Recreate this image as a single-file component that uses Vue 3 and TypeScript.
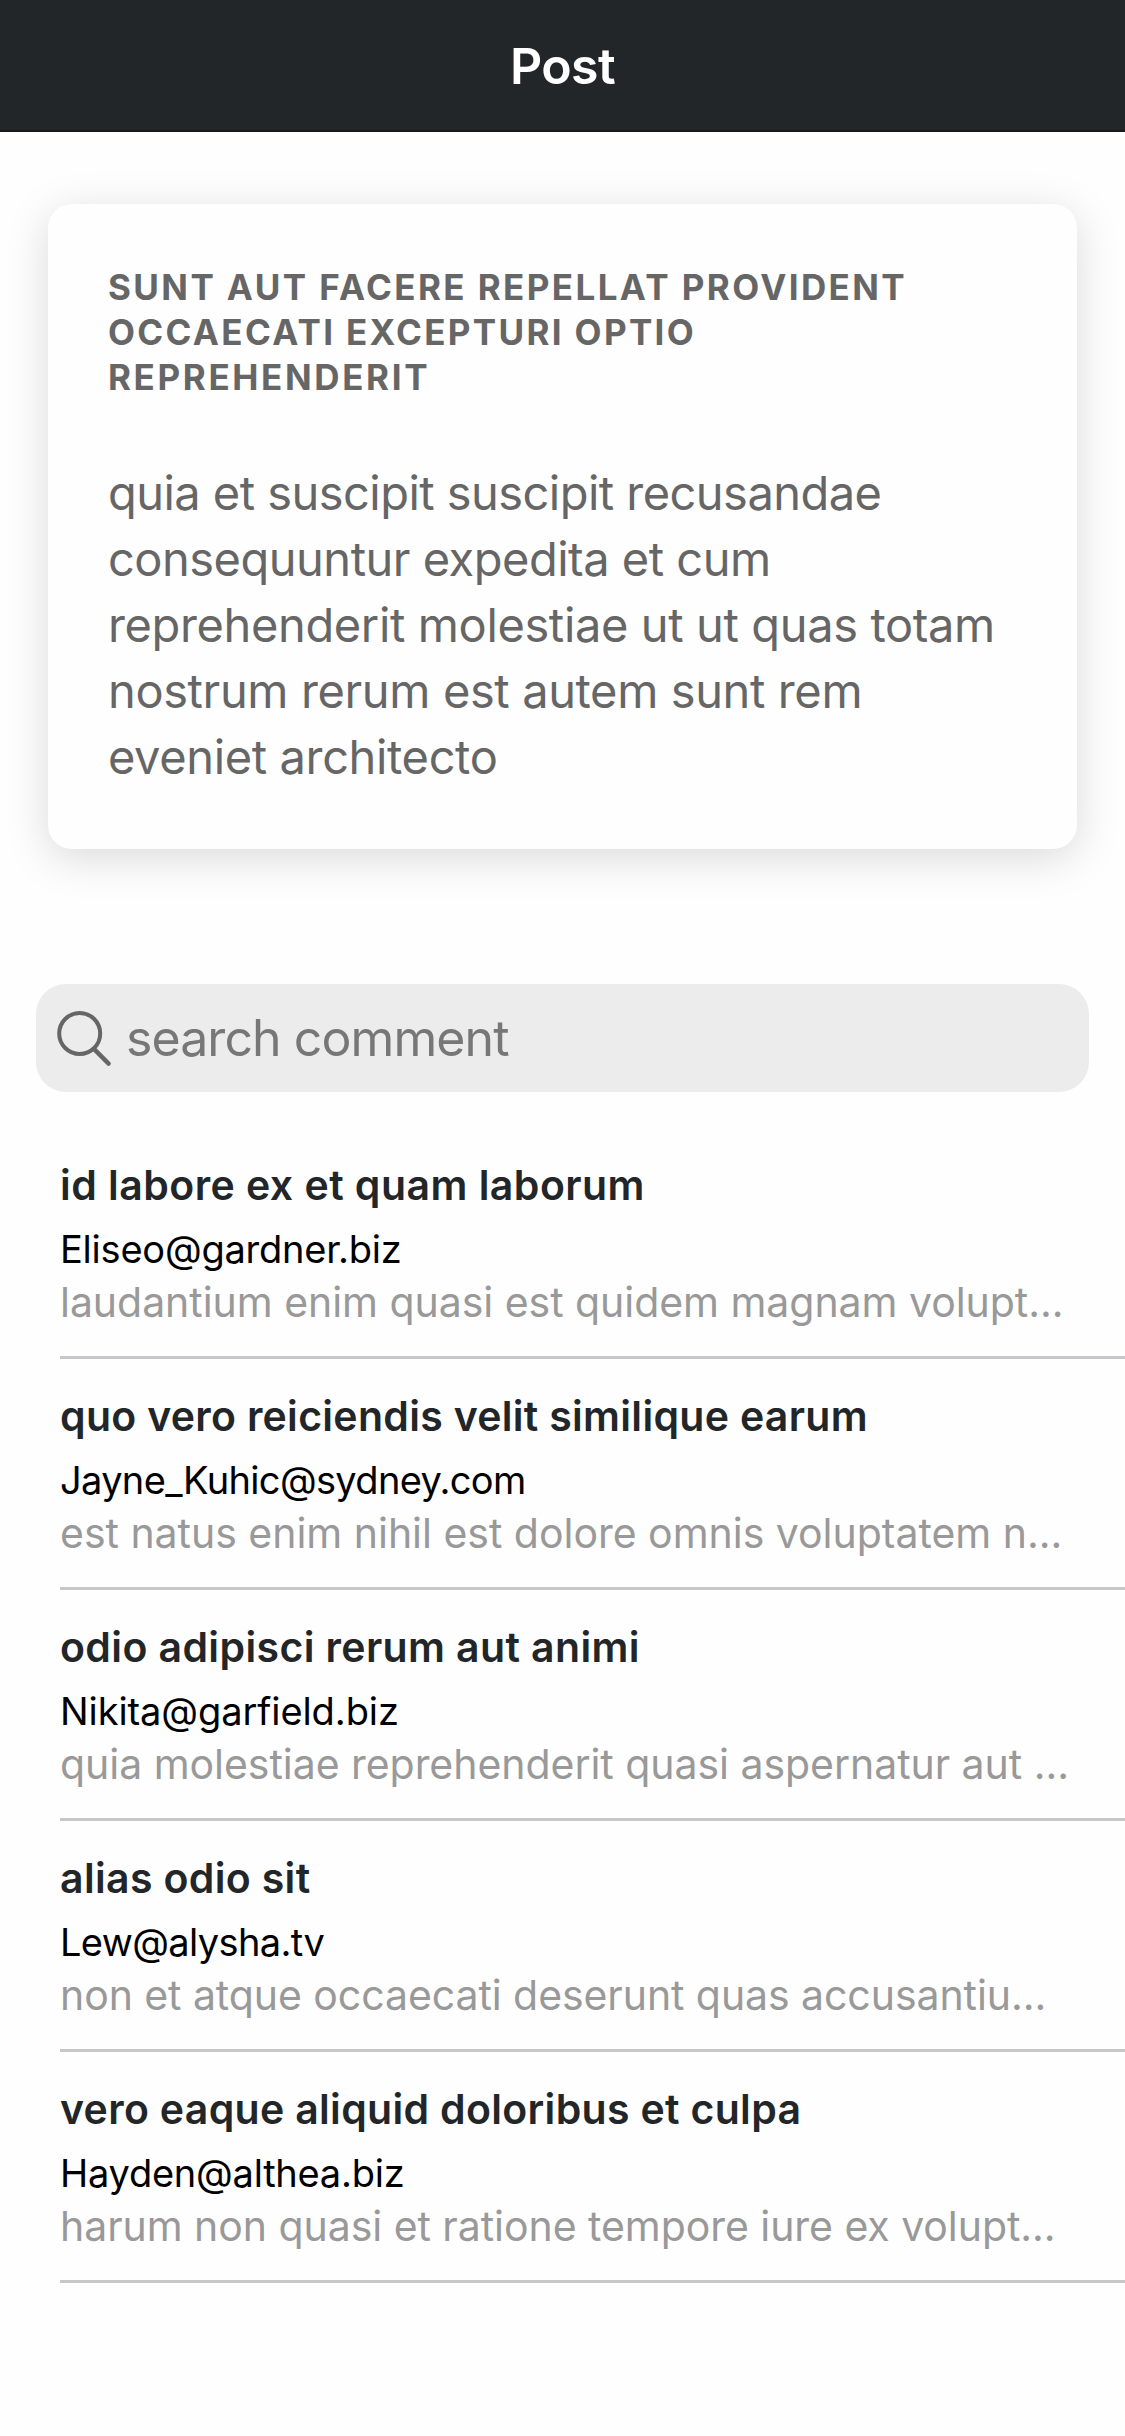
<script setup lang="ts">
interface Line {
  text: string
  /** letter spacing in pixels */
  tracking: number
}
interface Comment {
  id: number
  name: Line
  email: Line
  body: Line
}

const line = (text: string, tracking: number): Line => ({ text, tracking })

const postTitle: Line[] = [
  line('sunt aut facere repellat provident', 2.4),
  line('occaecati excepturi optio', 2.34),
  line('reprehenderit', 2.63),
]

const postBody: Line[] = [
  line('quia et suscipit suscipit recusandae', -0.54),
  line('consequuntur expedita et cum', -0.5),
  line('reprehenderit molestiae ut ut quas totam', -0.37),
  line('nostrum rerum est autem sunt rem', -0.38),
  line('eveniet architecto', -0.37),
]

const comments: Comment[] = [
  {
    id: 1,
    name: line('id labore ex et quam laborum', 0.46),
    email: line('Eliseo@gardner.biz', -0.22),
    body: line('laudantium enim quasi est quidem magnam volupt...', -0.04),
  },
  {
    id: 2,
    name: line('quo vero reiciendis velit similique earum', 0.3),
    email: line('Jayne_Kuhic@sydney.com', -0.66),
    body: line('est natus enim nihil est dolore omnis voluptatem n...', -0.02),
  },
  {
    id: 3,
    name: line('odio adipisci rerum aut animi', 0.38),
    email: line('Nikita@garfield.biz', -0.08),
    body: line('quia molestiae reprehenderit quasi aspernatur aut ...', -0.04),
  },
  {
    id: 4,
    name: line('alias odio sit', 0.34),
    email: line('Lew@alysha.tv', -0.62),
    body: line('non et atque occaecati deserunt quas accusantiu...', -0.07),
  },
  {
    id: 5,
    name: line('vero eaque aliquid doloribus et culpa', 0.32),
    email: line('Hayden@althea.biz', -0.24),
    body: line('harum non quasi et ratione tempore iure ex volupt...', -0.05),
  },
]

const spacing = (l: Line) => ({ letterSpacing: `${l.tracking}px` })
</script>

<template>
  <div class="screen">
    <header class="bar"><h1>Post</h1></header>
    <main>
      <article class="card">
        <h2 class="card-title">
          <span v-for="l in postTitle" :key="l.text" :style="spacing(l)">{{ l.text }}</span>
        </h2>
        <p class="card-body">
          <span v-for="l in postBody" :key="l.text" :style="spacing(l)">{{ l.text }}</span>
        </p>
      </article>

      <label class="search">
        <svg class="search-icon" viewBox="0 0 56 56" fill="none" stroke="#666" stroke-linecap="round">
          <ellipse cx="23.7" cy="22.5" rx="20.5" ry="20.5" stroke-width="4" />
          <path d="M38.4 38.4 L52.6 52.6" stroke-width="4.4" />
        </svg>
        <input type="text" placeholder="search comment" />
      </label>

      <ul class="comments">
        <li v-for="c in comments" :key="c.id" class="comment">
          <h3 class="name" :style="spacing(c.name)">{{ c.name.text }}</h3>
          <p class="email" :style="spacing(c.email)">{{ c.email.text }}</p>
          <p class="text" :style="spacing(c.body)">{{ c.body.text }}</p>
        </li>
      </ul>
    </main>
  </div>
</template>

<style>
body {
  background: #fefefe;
}
</style>

<style scoped>
.screen {
  width: 1125px;
  height: 2436px;
  overflow: hidden;
  background: #fefefe;
  font-family: Inter, Roboto, sans-serif;
}

h1,
h2,
h3,
p,
ul {
  margin: 0;
  padding: 0;
}

.bar {
  box-sizing: border-box;
  height: 132px;
  padding-top: 16px;
  background: #222629;
  border-bottom: 2px solid #1a1a1e;
  text-align: center;
}

.bar h1 {
  color: #fff;
  font-size: 50px;
  font-weight: 600;
  line-height: 101px;
  letter-spacing: -0.6px;
}

.card {
  box-sizing: border-box;
  height: 645px;
  margin: 72px 48px 0;
  padding: 61px 60px 0;
  border-radius: 24px;
  background: #fefefe;
  box-shadow: 0 9px 44px rgba(0, 0, 0, 0.145);
  color: #666;
}

.card-title span,
.card-body span {
  display: block;
  white-space: nowrap;
}

.card-title {
  font-size: 35px;
  font-weight: 700;
  line-height: 45px;
  text-transform: uppercase;
}

.card-body {
  margin-top: 60px;
  font-size: 47px;
  line-height: 66px;
}

.search {
  display: flex;
  align-items: center;
  box-sizing: border-box;
  height: 108px;
  margin: 135px 36px 0;
  padding-left: 20px;
  border-radius: 30px;
  background: #ececec;
}

.search-icon {
  flex: none;
  width: 56px;
  height: 56px;
  margin-top: 2px;
}

.search input {
  flex: 1;
  min-width: 0;
  height: 108px;
  margin-left: 14px;
  padding: 0;
  border: 0;
  outline: 0;
  background: transparent;
  color: #222629;
  font: 400 50px Inter, Roboto, sans-serif;
  letter-spacing: -0.92px;
}

.search input::placeholder {
  color: #777;
  opacity: 1;
}

.comments {
  margin-top: 36px;
  padding-left: 60px;
  list-style: none;
}

.comment {
  box-sizing: border-box;
  height: 231px;
  padding-top: 32px;
  border-bottom: 3px solid #c7c6cb;
  white-space: nowrap;
}

.name {
  color: #222629;
  font-size: 41px;
  font-weight: 600;
  line-height: 50px;
}

.email {
  margin-top: 17px;
  color: #000;
  font-size: 38px;
  line-height: 45px;
}

.text {
  margin-top: 5px;
  color: #999;
  font-size: 41px;
  line-height: 51px;
}
</style>
